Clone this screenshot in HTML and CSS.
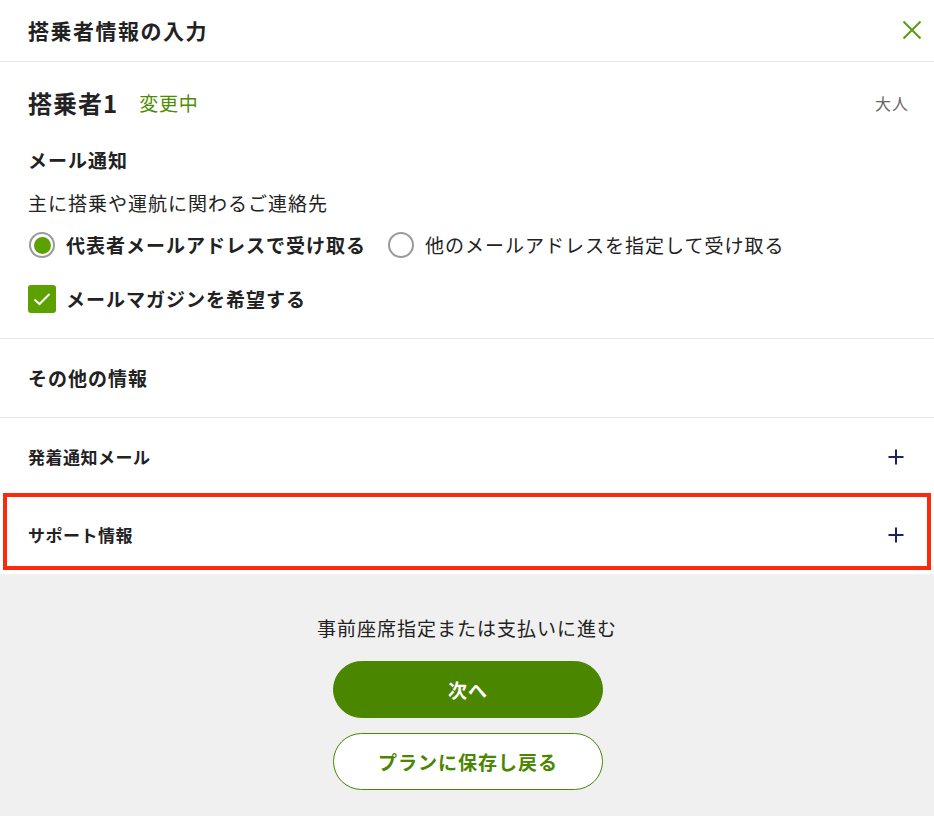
FILE: index.html
```html
<!DOCTYPE html>
<html lang="ja">
<head>
<meta charset="utf-8">
<title>搭乗者情報の入力</title>
<link rel="stylesheet" href="styles.css">
</head>
<body>
<div class="page">
  <header class="header">
    <h1 class="header-title">搭乗者情報の入力</h1>
    <button class="close" aria-label="閉じる">
      <svg width="20" height="20" viewBox="0 0 20 20"><path d="M1.5 1.5 L18.5 18.5 M18.5 1.5 L1.5 18.5" stroke="#5a9a14" stroke-width="2" fill="none"/></svg>
    </button>
  </header>

  <section class="passenger">
    <div class="passenger-head">
      <span class="passenger-name">搭乗者1</span>
      <span class="status">変更中</span>
      <span class="type">大人</span>
    </div>
    <h2 class="sub-title">メール通知</h2>
    <p class="desc">主に搭乗や運航に関わるご連絡先</p>
    <div class="radios">
      <label class="radio checked"><span class="radio-mark"></span><span class="radio-label bold">代表者メールアドレスで受け取る</span></label>
      <label class="radio"><span class="radio-mark"></span><span class="radio-label">他のメールアドレスを指定して受け取る</span></label>
    </div>
    <label class="check">
      <span class="check-box"><svg width="24" height="24" viewBox="0 0 24 24"><path d="M4.5 12.5 L9.5 17 L19.5 7" stroke="#fff" stroke-width="2" fill="none"/></svg></span>
      <span class="check-label">メールマガジンを希望する</span>
    </label>
  </section>

  <section class="other">
    <h2 class="other-title">その他の情報</h2>
  </section>

  <div class="acc-row">
    <span class="acc-title">発着通知メール</span>
    <svg class="plus" width="16" height="16" viewBox="0 0 16 16"><path d="M8 0.5 V15.5 M0.5 8 H15.5" stroke="#1b2366" stroke-width="2" fill="none"/></svg>
  </div>
  <div class="acc-row highlight">
    <span class="acc-title">サポート情報</span>
    <svg class="plus" width="16" height="16" viewBox="0 0 16 16"><path d="M8 0.5 V15.5 M0.5 8 H15.5" stroke="#1b2366" stroke-width="2" fill="none"/></svg>
  </div>

  <footer class="footer">
    <p class="footer-text">事前座席指定または支払いに進む</p>
    <button class="btn btn-primary">次へ</button>
    <button class="btn btn-secondary">プランに保存し戻る</button>
  </footer>
</div>
</body>
</html>
```

FILE: styles.css
```css
* { box-sizing: border-box; }
html, body { margin: 0; padding: 0; }
body {
  font-family: "Noto Sans CJK JP", "Noto Sans", sans-serif;
  color: #222;
  background: #f0f0f0;
}
.page {
  width: 934px;
  height: 816px;
  background: #fff;
  display: flex;
  flex-direction: column;
  overflow: hidden;
}
.header {
  height: 62px;
  border-bottom: 1px solid #e4e4e4;
  display: flex;
  align-items: center;
  justify-content: space-between;
  padding: 0 12px 1px 28px;
}
.header-title {
  margin: 0;
  font-size: 21px;
  letter-spacing: 1.5px;
  font-weight: 700;
  line-height: 28px;
  color: #222;
}
.close {
  border: 0;
  background: none;
  padding: 0;
  width: 20px;
  height: 20px;
  display: flex;
}
.passenger {
  padding: 25px 25px 25px 28px;
  border-bottom: 1px solid #e4e4e4;
  display: flex;
  flex-direction: column;
}
.passenger-head {
  display: flex;
  align-items: center;
  height: 32px;
}
.passenger-name {
  font-size: 24px;
  letter-spacing: 1px;
  font-weight: 700;
  line-height: 32px;
}
.status {
  margin-left: 21px;
  font-size: 19px;
  letter-spacing: 0.8px;
  color: #4d8c05;
  line-height: 28px;
}
.type {
  margin-left: auto;
  font-size: 16px;
  letter-spacing: 1px;
  color: #666;
}
.sub-title {
  margin: 27px 0 0;
  font-size: 19px;
  letter-spacing: 1px;
  font-weight: 700;
  line-height: 28px;
}
.desc {
  margin: 15px 0 0;
  font-size: 19px;
  letter-spacing: 1px;
  line-height: 28px;
}
.radios {
  margin-top: 14px;
  display: flex;
  align-items: center;
  gap: 21px;
  height: 28px;
}
.radio {
  display: flex;
  align-items: center;
  gap: 11px;
}
.radio-mark {
  width: 26px;
  height: 26px;
  border-radius: 50%;
  border: 2px solid #9a9a9a;
  display: flex;
  align-items: center;
  justify-content: center;
  margin-left: 1px;
}
.radio.checked .radio-mark::after {
  content: "";
  width: 17px;
  height: 17px;
  border-radius: 50%;
  background: #5ca100;
}
.radio-label {
  font-size: 19px;
  letter-spacing: 1px;
  line-height: 28px;
}
.radio-label.bold { font-weight: 700; }
.check {
  margin-top: 26px;
  display: flex;
  align-items: center;
  gap: 10px;
  height: 28px;
}
.check-box {
  width: 28px;
  height: 28px;
  border-radius: 3px;
  background: #5ca100;
  display: flex;
  align-items: center;
  justify-content: center;
}
.check-label {
  font-size: 19px;
  letter-spacing: 1px;
  font-weight: 700;
  line-height: 28px;
}
.other {
  height: 79px;
  border-bottom: 1px solid #e4e4e4;
  display: flex;
  align-items: center;
  padding: 0 28px 1px;
}
.other-title {
  margin: 0;
  font-size: 19px;
  letter-spacing: 1px;
  font-weight: 700;
  line-height: 28px;
}
.acc-row {
  height: 78px;
  display: flex;
  align-items: center;
  justify-content: space-between;
  padding: 0 30px 0 28px;
  position: relative;
}
.acc-title {
  font-size: 17px;
  letter-spacing: 0.5px;
  font-weight: 700;
  line-height: 24px;
}
.highlight::after {
  content: "";
  position: absolute;
  left: 3px;
  right: 3px;
  top: -3px;
  bottom: 4px;
  border: 4px solid #fa2a0c;
  pointer-events: none;
}
.footer {
  flex: 1;
  background: #f0f0f0;
  display: flex;
  flex-direction: column;
  align-items: center;
  padding-top: 40px;
}
.footer-text {
  margin: 0;
  font-size: 19px;
  letter-spacing: 1px;
  line-height: 28px;
  color: #222;
}
.btn {
  width: 270px;
  height: 57px;
  border-radius: 29px;
  font-family: inherit;
  font-size: 19px;
  letter-spacing: 1px;
  font-weight: 700;
  cursor: pointer;
  margin-left: 2px;
}
.btn-primary {
  margin-top: 19px;
  background: #4a8600;
  border: 1px solid #4a8600;
  color: #fff;
}
.btn-secondary {
  margin-top: 15px;
  background: #fff;
  border: 1px solid #4a8600;
  color: #4a8600;
}
```
